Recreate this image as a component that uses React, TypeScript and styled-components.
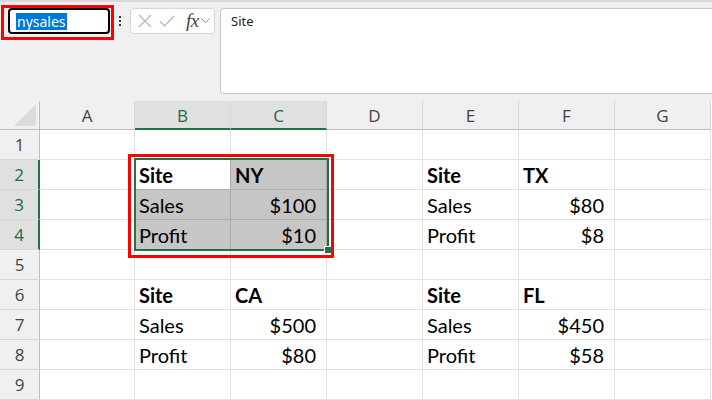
import styled, { createGlobalStyle } from 'styled-components';

const GlobalStyle = createGlobalStyle`
  html, body {
    margin: 0;
    padding: 0;
    background: #f0f0f0;
  }
`;

const COLUMNS = ['A', 'B', 'C', 'D', 'E', 'F', 'G'];
const ROWS = [1, 2, 3, 4, 5, 6, 7, 8, 9];

type CellData = { text: string; bold?: boolean; right?: boolean };

const CELLS: Record<string, CellData> = {
  B2: { text: 'Site', bold: true },
  C2: { text: 'NY', bold: true },
  B3: { text: 'Sales' },
  C3: { text: '$100', right: true },
  B4: { text: 'Profit' },
  C4: { text: '$10', right: true },
  E2: { text: 'Site', bold: true },
  F2: { text: 'TX', bold: true },
  E3: { text: 'Sales' },
  F3: { text: '$80', right: true },
  E4: { text: 'Profit' },
  F4: { text: '$8', right: true },
  B6: { text: 'Site', bold: true },
  C6: { text: 'CA', bold: true },
  B7: { text: 'Sales' },
  C7: { text: '$500', right: true },
  B8: { text: 'Profit' },
  C8: { text: '$80', right: true },
  E6: { text: 'Site', bold: true },
  F6: { text: 'FL', bold: true },
  E7: { text: 'Sales' },
  F7: { text: '$450', right: true },
  E8: { text: 'Profit' },
  F8: { text: '$58', right: true },
};

const isSelectedCol = (c: string) => c === 'B' || c === 'C';
const isSelectedRow = (r: number) => r >= 2 && r <= 4;

export default function App() {
  return (
    <>
      <GlobalStyle />
      <Page>
        <TopBar>
          <NameBox>
            <Selected>nysales</Selected>
          </NameBox>
          <Highlight $left={1} $top={3} $width={113} $height={35} />
          <Dots>
            <span />
            <span />
            <span />
          </Dots>
          <FormulaButtons>
            <svg width="14" height="14" viewBox="0 0 14 14">
              <path d="M1 1 L13 13 M13 1 L1 13" stroke="#b4b4b4" strokeWidth="1.2" fill="none" />
            </svg>
            <svg width="16" height="14" viewBox="0 0 16 14">
              <path d="M1 7.5 L5.5 12 L15 2" stroke="#b4b4b4" strokeWidth="1.2" fill="none" />
            </svg>
            <Fx>fx</Fx>
            <svg width="9" height="6" viewBox="0 0 9 6">
              <path d="M0.5 0.5 L4.5 4.8 L8.5 0.5" stroke="#8a8a8a" strokeWidth="1" fill="none" />
            </svg>
          </FormulaButtons>
          <FormulaInput>Site</FormulaInput>
        </TopBar>
        <Sheet>
          <Corner>
            <svg width="22" height="22" viewBox="0 0 22 22">
              <path d="M22 0 L22 22 L0 22 Z" fill="#dcdcdc" />
            </svg>
          </Corner>
          {COLUMNS.map((c) => (
            <ColHeader key={c} $active={isSelectedCol(c)}>
              {c}
            </ColHeader>
          ))}
          {ROWS.map((r) => (
            <Row key={r} r={r} />
          ))}
          <Selection>
            <FillHandle />
          </Selection>
          <Highlight $left={128} $top={53} $width={206} $height={104} />
        </Sheet>
      </Page>
    </>
  );
}

const Row = ({ r }: { r: number }) => (
  <>
    <RowHeader $active={isSelectedRow(r)}>{r}</RowHeader>
    {COLUMNS.map((c) => {
      const data = CELLS[`${c}${r}`];
      const inRange = isSelectedRow(r) && isSelectedCol(c);
      const isActiveCell = c === 'B' && r === 2;
      return (
        <Cell key={c} $shaded={inRange && !isActiveCell} $inRange={inRange} $right={data?.right}>
          {data && <CellText $bold={data.bold}>{data.text}</CellText>}
        </Cell>
      );
    })}
  </>
);

const Page = styled.div`
  width: 712px;
  height: 400px;
  overflow: hidden;
  background: #f0f0f0;
  font-family: 'Open Sans', 'Noto Sans', sans-serif;
`;

const TopBar = styled.div`
  height: 101px;
  box-sizing: border-box;
  display: flex;
  align-items: flex-start;
  padding: 6px 0 0 8px;
  border-top: 2px solid #d9d9d9;
  position: relative;
`;

const NameBox = styled.div`
  width: 102px;
  height: 26px;
  box-sizing: border-box;
  border: 2px solid #000;
  border-radius: 4px;
  background: #fff;
  display: flex;
  align-items: center;
  padding-left: 6px;
`;

const Selected = styled.span`
  background: #0078d7;
  color: #fff;
  font-family: 'Noto Sans', sans-serif;
  font-size: 14px;
  line-height: 17px;
  padding: 0 1px;
`;

const Highlight = styled.div<{ $left: number; $top: number; $width: number; $height: number }>`
  position: absolute;
  left: ${({ $left }) => $left}px;
  top: ${({ $top }) => $top}px;
  width: ${({ $width }) => $width}px;
  height: ${({ $height }) => $height}px;
  box-sizing: border-box;
  border: 3px solid #ff0000;
  pointer-events: none;
`;

const Dots = styled.div`
  width: 20px;
  height: 26px;
  display: flex;
  flex-direction: column;
  align-items: center;
  justify-content: center;
  gap: 2px;
  & > span {
    width: 2px;
    height: 2px;
    background: #333;
  }
`;

const FormulaButtons = styled.div`
  width: 85px;
  height: 26px;
  box-sizing: border-box;
  border: 1px solid #d6d6d6;
  border-radius: 4px;
  background: #fff;
  display: flex;
  align-items: center;
  gap: 7px;
  padding-left: 7px;
`;

const Fx = styled.span`
  font-family: 'Liberation Serif', serif;
  font-style: italic;
  font-size: 19px;
  color: #444;
  margin-left: 4px;
  margin-right: -5px;
  letter-spacing: -0.5px;
  line-height: 20px;
`;

const FormulaInput = styled.div`
  flex: 1;
  margin-left: 5px;
  height: 86px;
  box-sizing: border-box;
  border: 1px solid #c8c8c8;
  border-right: none;
  border-radius: 4px 0 0 4px;
  background: #fff;
  padding: 3px 10px;
  font-family: 'Noto Sans', sans-serif;
  font-size: 13px;
  color: #222;
`;

const Sheet = styled.div`
  position: relative;
  display: grid;
  grid-template-columns: 40px 95px repeat(6, 96px);
  grid-template-rows: 29px repeat(9, 30px);
  background: #fff;
`;

const Corner = styled.div`
  background: #f0f0f0;
  border-right: 1px solid #bdbdbd;
  border-bottom: 1px solid #bdbdbd;
  display: flex;
  align-items: flex-end;
  justify-content: flex-end;
  padding: 0 3px 3px 0;
`;

const ColHeader = styled.div<{ $active?: boolean }>`
  background: ${({ $active }) => ($active ? '#e0e0e0' : '#f0f0f0')};
  color: ${({ $active }) => ($active ? '#1d6b40' : '#444')};
  border-right: 1px solid #d8d8d8;
  border-bottom: ${({ $active }) => ($active ? '2px solid #217346' : '1px solid #bdbdbd')};
  display: flex;
  align-items: center;
  justify-content: center;
  font-size: 17px;
  padding-top: 1px;
`;

const RowHeader = styled.div<{ $active?: boolean }>`
  background: ${({ $active }) => ($active ? '#e0e0e0' : '#f0f0f0')};
  color: ${({ $active }) => ($active ? '#1d6b40' : '#444')};
  border-right: ${({ $active }) => ($active ? '2px solid #217346' : '1px solid #bdbdbd')};
  border-bottom: 1px solid #d8d8d8;
  display: flex;
  align-items: center;
  justify-content: center;
  font-size: 17px;
`;

const Cell = styled.div<{ $shaded?: boolean; $inRange?: boolean; $right?: boolean }>`
  background: ${({ $shaded }) => ($shaded ? '#c6c6c6' : '#fff')};
  border-right: 1px solid ${({ $inRange }) => ($inRange ? '#ababab' : '#e1e1e1')};
  border-bottom: 1px solid ${({ $inRange }) => ($inRange ? '#ababab' : '#e1e1e1')};
  display: flex;
  align-items: center;
  justify-content: ${({ $right }) => ($right ? 'flex-end' : 'flex-start')};
  padding: 0 10px 0 4px;
  overflow: hidden;
  white-space: nowrap;
`;

const CellText = styled.span<{ $bold?: boolean }>`
  font-family: Lato, 'Open Sans', sans-serif;
  font-size: 20px;
  font-weight: ${({ $bold }) => ($bold ? 700 : 400)};
  color: #000;
`;

const Selection = styled.div`
  position: absolute;
  left: 134px;
  top: 57px;
  width: 195px;
  height: 93px;
  box-sizing: border-box;
  border: 2px solid #217346;
  pointer-events: none;
`;

const FillHandle = styled.div`
  position: absolute;
  right: -5px;
  bottom: -5px;
  width: 6px;
  height: 6px;
  background: #217346;
  border: 1px solid #fff;
`;
